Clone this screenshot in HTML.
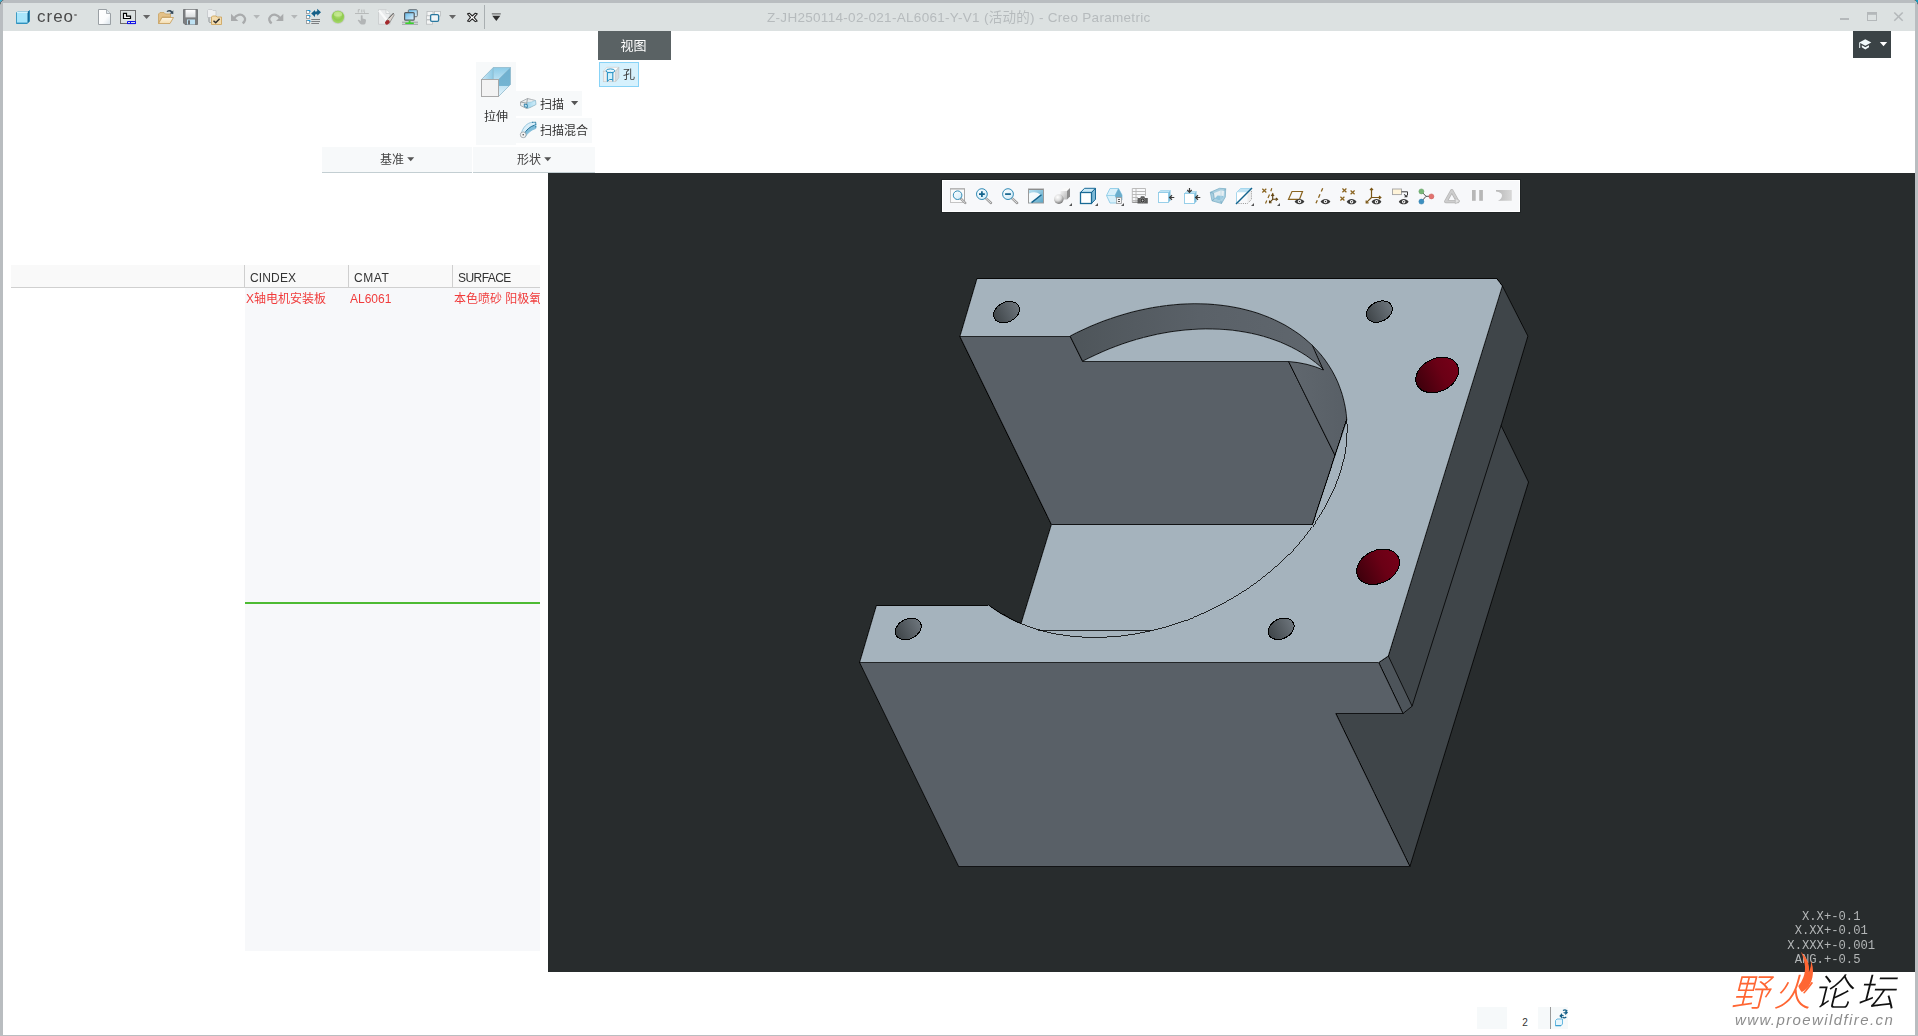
<!DOCTYPE html>
<html lang="zh-CN">
<head>
<meta charset="utf-8">
<title>Z-JH250114-02-021-AL6061-Y-V1 - Creo Parametric</title>
<style>
html,body{margin:0;padding:0;}
body{width:1918px;height:1036px;position:relative;overflow:hidden;background:#ffffff;
 font-family:"Liberation Sans","Noto Sans CJK SC",sans-serif;color:#333;}
.abs{position:absolute;}
#creo,#title,#viewtab,#holebtn span,#extrude span,#sweep span,#blend span,.grp span,.th,.td,#tol,.wmc,#wm2,.g{will-change:transform;}
#frame-top{left:0;top:0;width:1918px;height:3px;background:#b9bdc0;}
#frame-left{left:0;top:0;width:3px;height:1036px;background:#b9bdc0;}
#frame-right{left:1915px;top:0;width:3px;height:1036px;background:#b9bdc0;}
#frame-bottom{left:0;top:1035px;width:1918px;height:1px;background:#b9bdc0;}
#titlebar{left:3px;top:3px;width:1912px;height:28px;background:#dce1e1;}
#title{left:767px;top:8.5px;font-size:13.5px;line-height:17px;color:#b6bbbd;white-space:nowrap;letter-spacing:0.3px;}
#creo{left:36.8px;top:6.2px;font-size:17px;line-height:22px;color:#4a4a4a;letter-spacing:1px;}
#viewtab{left:598px;top:31px;width:73px;height:29px;background:#5a6264;color:#fff;font-size:13px;line-height:30px;text-align:center;text-indent:-2px;}
#holebtn{left:599px;top:62px;width:38px;height:23px;background:#d6f1fd;border:1px solid #88d3f7;}
#holebtn span{position:absolute;left:23px;top:4px;font-size:12px;line-height:16px;color:#3d3d3d;}
#extrude{left:476px;top:62px;width:40px;height:83px;background:#f7f9fa;}
#extrude span{position:absolute;left:-0.5px;width:40px;top:47px;text-align:center;font-size:12px;line-height:16px;color:#333;}
#sweep{left:516px;top:91px;width:66px;height:25px;background:#f7f9fa;}
#sweep span{position:absolute;left:23.5px;top:5.5px;font-size:12px;line-height:16px;color:#333;}
#blend{left:516px;top:118px;width:76px;height:25px;background:#f7f9fa;}
#blend span{position:absolute;left:23.5px;top:5.3px;font-size:12px;line-height:16px;color:#333;}
.grp{top:147px;height:25px;background:#f7f9fa;border-bottom:1px solid #c3ced2;font-size:12px;line-height:25px;color:#444;text-align:center;}
#grp1{left:322px;width:150px;}
#grp2{left:473px;width:122px;}
.tri{display:inline-block;width:0;height:0;border-left:3.8px solid transparent;border-right:3.8px solid transparent;border-top:4.4px solid #555;vertical-align:middle;margin-left:2px;margin-top:-1px;}
#help{left:1853px;top:31px;width:38px;height:27px;background:#3b4346;}
#thead{left:11px;top:265px;width:529px;height:22px;background:#f9f9f9;border-bottom:1px solid #d0d0d0;}
.th{top:265px;height:22px;border-left:1px solid #cfcfcf;font-size:12px;line-height:26px;color:#333;padding-left:5px;}
#tbody{left:245px;top:288px;width:295px;height:663px;background:#f7f8fa;}
.td{top:292px;font-size:12px;line-height:15px;color:#f03c3c;white-space:nowrap;overflow:hidden;}
#green{left:245px;top:602px;width:295px;height:2px;background:#4dbb33;}
#viewport{left:548px;top:173px;width:1367px;height:799px;background:#282c2d;overflow:hidden;}
#vtb{left:942px;top:180px;width:576px;height:30px;background:#f7f8fa;border:1px solid #ffffff;box-shadow:0 0 0 1px #1f2324;}
#tol{left:1780px;top:910px;width:200px;font-family:"Liberation Mono",monospace;font-size:12.2px;line-height:14.3px;color:#b3b6b7;white-space:pre;text-align:left;}
.sb{top:1007px;height:22px;background:#f6f9fa;}
.wmc{top:966px;font-family:"Noto Sans CJK SC","Liberation Sans",sans-serif;font-weight:300;font-size:38px;line-height:48px;font-style:italic;white-space:nowrap;color:#ff6633;}
#wm2{left:1734.5px;top:1010.7px;font-size:15px;line-height:18px;font-style:italic;color:#8c8c8c;white-space:nowrap;letter-spacing:1.4px;}
</style>
</head>
<body>
<div id="root" style="position:absolute;left:0;top:0;width:1918px;height:1036px;">
<!-- window frame -->
<div class="abs" id="frame-top"></div>
<div class="abs" id="titlebar"></div>
<div class="abs" id="frame-left"></div>
<div class="abs" id="frame-right"></div>
<div class="abs" id="frame-bottom"></div>
<div class="abs" id="creo">creo</div>
<div class="abs" style="left:74.300px;top:13.800px;width:2.400px;height:2.400px;border-radius:50%;background:#858585;"></div>
<div class="abs" id="title">Z-JH250114-02-021-AL6061-Y-V1 (活动的) - Creo Parametric</div>
<svg class="abs" style="left:0;top:0;z-index:6" width="1918" height="5" viewBox="0 0 1918 5" shape-rendering="crispEdges">
<rect x="0" y="0" width="2" height="1" fill="#3fb2d2"/><rect x="0" y="1" width="1" height="1" fill="#45aecf"/><rect x="2" y="0" width="1" height="1" fill="#5f7579"/><rect x="1" y="1" width="1" height="1" fill="#5f7579"/><rect x="0" y="2" width="1" height="2" fill="#5f7579"/><rect x="3" y="0" width="1" height="1" fill="#a9abad"/><rect x="0" y="4" width="1" height="1" fill="#a9abad"/>
<rect x="1916" y="0" width="2" height="2" fill="#08a2ca"/><rect x="1917" y="2" width="1" height="1" fill="#2c8aa5"/><rect x="1915" y="0" width="1" height="1" fill="#5f7579"/><rect x="1916" y="1" width="1" height="1" fill="#3f8aa0"/><rect x="1917" y="3" width="1" height="1" fill="#5f7579"/><rect x="1914" y="0" width="1" height="1" fill="#a9abad"/><rect x="1917" y="4" width="1" height="1" fill="#a9abad"/>
</svg>
<!--QAT_START-->
<svg class="abs" style="left:0;top:0" width="520" height="32" viewBox="0 0 520 32">
<defs>
<linearGradient id="qpage" x1="0" y1="0" x2="1" y2="1"><stop offset="0" stop-color="#ffffff"/><stop offset="0.6" stop-color="#fbfcfd"/><stop offset="1" stop-color="#d5e0e8"/></linearGradient>
<linearGradient id="qfold" x1="0" y1="0" x2="0" y2="1"><stop offset="0" stop-color="#fdf6e6"/><stop offset="1" stop-color="#f3dcae"/></linearGradient>
<linearGradient id="qmon" x1="0" y1="0" x2="1" y2="1"><stop offset="0" stop-color="#5fb7ea"/><stop offset="1" stop-color="#e2f2fb"/></linearGradient>
<radialGradient id="qball" cx="0.5" cy="0.35" r="0.65"><stop offset="0" stop-color="#b9e27a"/><stop offset="0.6" stop-color="#8fcb4f"/><stop offset="1" stop-color="#a8d86e"/></radialGradient>
<linearGradient id="qsave" x1="0" y1="0" x2="0" y2="1"><stop offset="0" stop-color="#ffffff"/><stop offset="1" stop-color="#d9dcde"/></linearGradient>
</defs>
<!-- creo cube -->
<path d="M17.5 11.5 L28.5 11.5 L29.5 10.5 L29.5 21.5 L27 23.5 L16.5 23.5 L16.5 12.5 Z" fill="#a9e6fb" stroke="#3f9cc4" stroke-width="1"/>
<path d="M27.5 12 L29.3 10.6 L29.3 21.4 L27.5 23 Z" fill="#146a97"/>
<path d="M17 12 L28 12" stroke="#ffffff" stroke-width="1"/>
<path d="M16.5 23.2 L27.2 23.2" stroke="#2b8fbd" stroke-width="1.2"/>
<!-- new file -->
<path d="M98.5 9.5 L106.5 9.5 L110.5 13.5 L110.5 24.5 L98.5 24.5 Z" fill="url(#qpage)" stroke="#9aa0a4" stroke-width="1"/>
<path d="M106.5 9.5 L106.5 13.5 L110.5 13.5" fill="#dfe8ee" stroke="#9aa0a4" stroke-width="0.8"/>
<!-- drawing icon -->
<rect x="120.5" y="10.5" width="15" height="13" fill="#dde2e2" stroke="#6d6d6d" stroke-width="1"/>
<path d="M123.5 13.3 L126.5 13.3 L126.5 16.2 L130.5 16.2 L130.5 18.5 L123.5 18.5 Z" fill="#ffffff" stroke="#000" stroke-width="1.2"/>
<path d="M127.5 24 L127.5 21.5 L135.5 21.5 L135.5 24 M130.5 21.5 L130.5 24 M127.5 23.6 L135.5 23.6" fill="none" stroke="#1111ee" stroke-width="1"/>
<path d="M143 15 L150.2 15 L146.6 19 Z" fill="#666"/>
<!-- open folder -->
<path d="M158.5 23.5 L158.5 14 L160 12.5 L164 12.5 L165.5 14 L170.5 14 L170.5 17 L162 17 Z" fill="#e3c189" stroke="#c9a363" stroke-width="0.8"/>
<path d="M158.5 23.5 L162 17.5 L173.5 17.5 L170 23.5 Z" fill="url(#qfold)" stroke="#c9a363" stroke-width="0.9"/>
<path d="M166.5 11.2 C168.5 9.6 171 9.8 172.2 11.6 L173.3 10.2 L173.3 14 L169.6 13.6 L171 12.5 C170.2 11.2 168.4 11.2 167.3 12 Z" fill="#34495a"/>
<!-- save -->
<path d="M183.5 9.5 L197.5 9.5 L197.5 24.5 L185 24.5 L183.5 23 Z" fill="#7d7f81" stroke="#6a6c6e" stroke-width="0.8"/>
<rect x="185.5" y="9.8" width="10" height="7.6" fill="url(#qsave)"/>
<rect x="187" y="19.5" width="8" height="5" fill="#bfe2f3"/>
<rect x="188" y="20.3" width="2" height="4.2" fill="#6b6d6f"/>
<!-- folder check -->
<path d="M207.5 10.5 L208.5 9.5 L212 9.5 L213 10.5 L216 10.5 L216 17.5 L207.5 17.5 Z" fill="#eef0f1" stroke="#c3c7c9" stroke-width="0.8"/>
<path d="M209 17.5 L209 21.5 Q209 22.5 210.5 22.5 L212 22.5" fill="none" stroke="#8d9193" stroke-width="1"/>
<path d="M211.5 24.5 L211.5 17 L212.5 16 L216 16 L217 17 L221.5 17 L221.5 24.5 Z" fill="#f3dcae" stroke="#cfa761" stroke-width="0.9"/>
<path d="M213.5 20.8 L215.7 22.8 L219.6 18.8" fill="none" stroke="#2e2e2e" stroke-width="1.5"/>
<!-- undo -->
<path d="M231 13.700 L231 21 L238.300 21 Z" fill="#a9abac"/>
<path d="M234.300 18.300 C236 14.600 241 13.400 243.700 16.200 C246 18.600 245.300 21.600 242.600 23.300" fill="none" stroke="#a9abac" stroke-width="2.300"/>
<path d="M253.300 15 L260 15 L256.600 18.800 Z" fill="#b4b7b8"/>
<!-- redo -->
<path d="M283.300 13.700 L283.300 21 L276 21 Z" fill="#a9abac"/>
<path d="M280 18.300 C278.300 14.600 273.300 13.400 270.600 16.200 C268.300 18.600 269 21.600 271.700 23.300" fill="none" stroke="#a9abac" stroke-width="2.300"/>
<path d="M291 15 L297.700 15 L294.300 18.800 Z" fill="#b4b7b8"/>
<!-- regenerate -->
<g fill="#ffffff" stroke="#8a8f92" stroke-width="0.8"><rect x="306.5" y="10.5" width="3" height="3"/><rect x="306.5" y="15.5" width="3" height="3"/><rect x="306.5" y="20.5" width="3" height="3"/></g>
<g fill="none" stroke="#1e9fe0" stroke-width="1"><path d="M307.5 10.5 L310 10.5 L310 12"/><path d="M307.500 15.5 L310 15.5 L310 17"/><path d="M307.500 20.5 L310 20.5 L310 22"/></g>
<g stroke="#707476" stroke-width="0.9"><path d="M311.300 19.500 L320 19.500 M311.300 21.500 L320 21.500 M311.300 23.500 L319 23.500"/></g>
<path d="M311.200 13.500 L315 10 L315 12.300 Q317.200 12.300 318.200 14 Q316.600 14.200 315 14.500 L315 17 Z" fill="#145f87"/>
<path d="M321 12.300 L317.200 15.800 L317.200 13.500 Q315 13.500 314 11.800 Q315.600 11.600 317.200 11.300 L317.200 8.800 Z" fill="#145f87"/>
<!-- green ball -->
<circle cx="338" cy="17" r="7" fill="#c8cccd" /><circle cx="338" cy="17" r="6.200" fill="url(#qball)"/>
<ellipse cx="338" cy="14" rx="4.200" ry="2.600" fill="#d6f0a8" opacity="0.550"/>
<!-- grey hand -->
<g fill="none" stroke="#b2b5b6" stroke-width="0.9"><path d="M355 13.500 L368.800 13.500"/><path d="M358.300 12.500 L358.300 9.700 L360 9.700 M361.800 9.500 L361.800 12.500 M364 9.500 L364 12 L365 12.500"/></g>
<path d="M360.800 15.500 Q361.800 14.800 362.600 15.600 L362.600 18.500 L365.300 19.200 Q366.200 19.600 366 20.800 L365.400 23.500 Q365 24.500 363.800 24.500 L361.800 24.500 Q360.800 24.400 360 23.400 L357.800 20.600 Q357.600 19.600 358.800 19.800 L360.800 21 Z" fill="#b2b5b6"/>
<!-- page + eraser -->
<path d="M378.500 9.700 L386 9.700 L390 13.500 L390 24.300 L378.500 24.300 Z" fill="#e9ebec" stroke="#c6cacc" stroke-width="0.8"/>
<path d="M386 9.700 L386 13.500 L390 13.500" fill="#f6f7f7" stroke="#c6cacc" stroke-width="0.700"/>
<path d="M379 10.500 L389 23" stroke="#f9fafa" stroke-width="2.200"/>
<path d="M386.200 20.800 L393.300 13.400 L394.200 15 L389.200 23.400 Z" fill="#d9d2cc" stroke="#6e6e6e" stroke-width="0.600"/>
<path d="M393.600 13 L388.800 18" stroke="#4c4c4c" stroke-width="0.800"/>
<ellipse cx="387.400" cy="22.300" rx="2.600" ry="1.900" transform="rotate(-40 387.400 22.300)" fill="#a3282c"/>
<!-- monitors -->
<rect x="408.300" y="9.700" width="9" height="7" rx="1" fill="url(#qmon)" stroke="#6a7176" stroke-width="1"/>
<rect x="404.600" y="12.600" width="9.600" height="7.600" rx="1" fill="url(#qmon)" stroke="#555b60" stroke-width="1.200"/>
<path d="M409.400 20.500 L409.400 23.500 M402 22.200 L418 22.200 M402 24.300 L418 24.300" stroke="#8c9194" stroke-width="0.800" fill="none"/>
<path d="M408.700 20.600 L410.500 20.600 L410.500 22.600 L413.800 22.600 L413.800 24 L405.300 24 L405.300 22.600 L408.700 22.600 Z" fill="#39d42c"/>
<!-- windows -->
<g fill="#f4f5f5" stroke="#b9bdbf" stroke-width="0.800"><rect x="427" y="11.500" width="6" height="4.500"/><rect x="434.500" y="11.500" width="6" height="4.500"/><rect x="426.500" y="15.800" width="6" height="3.700"/><rect x="426.500" y="20" width="6" height="4.200"/></g>
<rect x="430.600" y="14.700" width="8" height="6.600" rx="1.200" fill="#f2f6f8" stroke="#2a789f" stroke-width="1.300"/>
<path d="M449 15 L456 15 L452.500 19 Z" fill="#666"/>
<!-- X close -->
<path d="M467.500 13.800 L469.300 13.200 L472.300 16 L475.300 13.200 L477.200 13.800 L474.100 17.400 L477.200 21 L475.300 21.600 L472.300 18.800 L469.300 21.600 L467.500 21 L470.500 17.400 Z" fill="#ffffff" stroke="#222" stroke-width="1.100" stroke-linejoin="round"/>
<rect x="484" y="5" width="1" height="24" fill="#a9afb1"/>
<path d="M491.800 13.900 L500.800 13.900" stroke="#444" stroke-width="0.900"/>
<path d="M492.300 15.800 L500.300 15.800 L496.300 21 Z" fill="#2e2e2e"/>
</svg>
<!--QAT_END-->
<!--WINCTL_START-->
<svg class="abs" style="left:1830px;top:0;z-index:5" width="88" height="62" viewBox="1830 0 88 62">
<rect x="1840" y="18" width="9" height="2" fill="#b4b8ba"/>
<rect x="1867.500" y="12.500" width="9" height="8" fill="none" stroke="#b4b8ba" stroke-width="1"/>
<rect x="1867" y="12" width="10" height="2.800" fill="#b4b8ba"/>
<path d="M1894.300 12.500 L1902.700 20.700 M1902.700 12.500 L1894.300 20.700" stroke="#b4b8ba" stroke-width="1.600" fill="none"/>
<path d="M1865.300 39.200 L1871.300 42.400 L1865.300 45.800 L1860.200 43 L1860.200 48 L1859.200 48 L1859.200 42.400 Z" fill="#f2fbfc"/>
<path d="M1861.800 45.200 L1865.300 47.200 L1869 45.200 L1869 47.300 L1865.300 49.500 L1861.800 47.300 Z" fill="#f2fbfc"/>
<path d="M1879.800 42 L1887.200 42 L1883.500 46.200 Z" fill="#ffffff"/>
</svg>
<!--WINCTL_END-->

<!-- ribbon -->
<div class="abs" id="viewtab">视图</div>
<div class="abs" id="holebtn"><span>孔</span></div>
<div class="abs" id="extrude"><span>拉伸</span></div>
<div class="abs" id="sweep"><span>扫描</span></div>
<div class="abs" id="blend"><span>扫描混合</span></div>
<div class="abs grp" id="grp1"><span style="position:absolute;left:58.2px;top:1px;">基准</span><svg style="position:absolute;left:85px;top:10px;" width="8" height="5" viewBox="0 0 8 5"><path d="M0.200 0.200 L7.200 0.200 L3.700 4.200 Z" fill="#555"/></svg></div>
<div class="abs grp" id="grp2"><span style="position:absolute;left:44px;top:1px;">形状</span><svg style="position:absolute;left:70.600px;top:10px;" width="8" height="5" viewBox="0 0 8 5"><path d="M0.200 0.200 L7.200 0.200 L3.700 4.200 Z" fill="#555"/></svg></div>
<div class="abs" id="help"></div>
<!--RIBBONICONS_START-->
<svg class="abs" style="left:470px;top:60px" width="180" height="90" viewBox="470 60 180 90">
<defs>
<linearGradient id="rtop" x1="0" y1="0" x2="1" y2="0"><stop offset="0" stop-color="#cfeaf8"/><stop offset="1" stop-color="#8cc9e4"/></linearGradient>
<linearGradient id="rback" x1="0" y1="0" x2="0" y2="1"><stop offset="0" stop-color="#8ccbe7"/><stop offset="1" stop-color="#b9e0f2"/></linearGradient>
<linearGradient id="rside" x1="0" y1="0" x2="0" y2="1"><stop offset="0" stop-color="#6fb0cf"/><stop offset="0.62" stop-color="#74b4d2"/><stop offset="0.64" stop-color="#c2e4f4"/><stop offset="1" stop-color="#e3f3fb"/></linearGradient>
<linearGradient id="rsw" x1="0" y1="0" x2="1" y2="0"><stop offset="0" stop-color="#9ed6ee"/><stop offset="1" stop-color="#d2ecf8"/></linearGradient>
</defs>
<!-- extrude -->
<path d="M481.500 79.500 L493.300 67.500 L493.300 79.500 Z" fill="url(#rtop)"/>
<path d="M493.300 67.500 L510.500 67.500 L498.500 79.500 L493.300 79.500 Z" fill="url(#rback)"/>
<path d="M498.500 79.500 L510.500 67.500 L510.500 84.500 L498.500 96.500 Z" fill="url(#rside)"/>
<path d="M481.500 79.500 L493.300 67.500 L510.500 67.500 L510.500 84.500 L498.500 96.500" fill="none" stroke="#8fb9cc" stroke-width="0.800"/>
<path d="M493.300 67.500 L493.300 79.500 M498.500 79.500 L510.500 67.500" fill="none" stroke="#7fb3cb" stroke-width="0.700"/>
<rect x="481.500" y="79.500" width="17" height="17" fill="#f3f3f3" stroke="#a9a9a9" stroke-width="1"/>
<!-- sweep -->
<path d="M520.500 102 L527.500 98.500 L531.500 99.500 L535.500 100.500 L535.800 104.500 L530 107.500 L526.500 108.500 L520.500 105.500 Z" fill="#e9ecee" stroke="#9aa0a3" stroke-width="0.800"/>
<path d="M527 102.500 Q531 102.800 535.500 100.500 L535.800 104.500 Q531 107 527.500 108.300 Z" fill="url(#rsw)" stroke="#8fc6de" stroke-width="0.600"/>
<path d="M520.500 102 L526.700 103.200 L527.500 98.500 M526.700 103.200 L526.700 108.300" fill="none" stroke="#8c9295" stroke-width="0.800"/>
<path d="M524.300 104 L527.300 104.700 L527.300 107.600 L524.300 106.600 Z" fill="#bfe4f5" stroke="#2b7ea6" stroke-width="0.900"/>
<path d="M571 101 L578.200 101 L574.600 105.200 Z" fill="#555"/>
<!-- swept blend -->
<path d="M521 134 C523 127 527 123 532 122.300 L535.800 122.300 L535.800 128.500 C531 130 527.500 133 525 137.400 Z" fill="#d9eef9" stroke="#86bdd6" stroke-width="0.800"/>
<path d="M523.500 136 C526 130 530 126.500 534 125.400 L535.800 122.300 L535.800 128.500 C531 130 527.500 133 525 137.400 Z" fill="#7fbcd9"/>
<path d="M532 122.300 L535.800 122.300 L535.800 128.500" fill="none" stroke="#1f6f96" stroke-width="0.900" stroke-dasharray="1.500 1"/>
<path d="M523.500 135 C526 130 530 126.500 534.500 125.200" fill="none" stroke="#1f6f96" stroke-width="1"/>
<circle cx="523.200" cy="134.800" r="2.900" fill="#f1f3f4" stroke="#9aa0a3" stroke-width="0.800"/>
<circle cx="523.200" cy="134.800" r="0.700" fill="#333"/>
<!-- hole -->
<path d="M603.300 71.300 L606.800 67.300 L618.800 67.300 L615.600 71.300 Z" fill="#fdfdfd" stroke="#c9c9c9" stroke-width="0.600"/>
<path d="M615.600 71.300 L618.800 67.300 L618.800 77.800 L615.600 81.700 Z" fill="#d7dee2" stroke="#b9bcbe" stroke-width="0.600"/>
<rect x="603.300" y="71.300" width="12.300" height="10.400" fill="#efefef" stroke="#cbcbcb" stroke-width="0.700"/>
<path d="M607.400 72.600 L607.400 81.800 L609 80 Q610.200 79 612.700 79.600 L612.700 72.600 Z" fill="#d2f2fd"/>
<ellipse cx="610.400" cy="70.800" rx="4.400" ry="1.900" fill="#e9f8fe" stroke="#2a93c6" stroke-width="1"/>
<path d="M607.400 72.300 L607.400 81.800 M612.800 72.300 L612.800 81.500" fill="none" stroke="#2a93c6" stroke-width="1.100"/>
<path d="M607.600 72.900 Q610.200 71.600 612.700 72.900" fill="none" stroke="#2a93c6" stroke-width="0.900"/>
<path d="M607.600 81 Q609 78.800 612.700 79.500" fill="none" stroke="#2a93c6" stroke-width="1"/>
</svg>
<!--RIBBONICONS_END-->

<!-- table -->
<div class="abs" id="thead"></div>
<div class="abs th" style="left:244px;width:98px;letter-spacing:0.15px;">CINDEX</div>
<div class="abs th" style="left:348px;width:98px;letter-spacing:0.6px;">CMAT</div>
<div class="abs th" style="left:452px;width:82px;letter-spacing:-0.55px;">SURFACE</div>
<div class="abs" id="tbody"></div>
<div class="abs td" style="left:246px;width:100px;">X轴电机安装板</div>
<div class="abs td" style="left:350px;width:100px;">AL6061</div>
<div class="abs td" style="left:454px;width:86px;">本色喷砂 阳极氧化</div>
<div class="abs" id="green"></div>

<!-- viewport -->
<div class="abs" id="viewport">
<!--MODEL_START-->
<svg class="abs" style="left:0;top:0" width="1367" height="799" viewBox="548 173 1367 799">
<defs><linearGradient id="gband" x1="1070" y1="0" x2="1330" y2="0" gradientUnits="userSpaceOnUse"><stop offset="0" stop-color="#4e555a"/><stop offset="0.5" stop-color="#5a6168"/><stop offset="1" stop-color="#60676e"/></linearGradient><linearGradient id="gwall" x1="1290" y1="0" x2="1346" y2="0" gradientUnits="userSpaceOnUse"><stop offset="0" stop-color="#60676e"/><stop offset="1" stop-color="#585f66"/></linearGradient><linearGradient id="ghole" x1="0" y1="0" x2="1" y2="0"><stop offset="0" stop-color="#3f4549"/><stop offset="1" stop-color="#6d757c"/></linearGradient><linearGradient id="gred" x1="0" y1="0" x2="1" y2="0"><stop offset="0" stop-color="#3e000c"/><stop offset="0.6" stop-color="#6a0015"/><stop offset="1" stop-color="#760018"/></linearGradient></defs>
<g stroke="#000" stroke-width="0.8" stroke-linejoin="round" shape-rendering="crispEdges">
<path fill="#3f4549" d="M1496.7 278.5 L1502.4 286 L1527.9 336.1 L1501.1 425.5 L1528.5 482.1 L1409.9 866.5 L1335.8 713.5 L1403 713.5 L1378.7 662.5 L1388.3 656 Z"/>
<path fill="#4d545a" d="M1378.7 662.5 L1388.3 656 L1412.1 706.2 L1403 713.5 Z"/>
<path fill="none" d="M1501.1 425.5 L1412.1 706.2"/>
<path fill="#596067" d="M859.6 662.5 L1378.7 662.5 L1403 713.5 L1335.8 713.5 L1409.9 866.5 L958.7 866.5 Z"/>
<path fill="#a5b3bd" d="M977 278.5 L1496.7 278.5 L1502.4 286 L1388.3 656 L1378.7 662.5 L859.6 662.5 L876.4 605.5 L988 605.5 L988.6 605.0 L992.8 608.1 L997.1 611.0 L1001.6 613.9 L1006.3 616.5 L1011.1 619.0 L1016.0 621.4 L1021.0 623.6 L1051.4 524.5 L959.9 336.5 Z"/>
<path fill="#596067" d="M959.9 336.5 L1070.3 336.5 L1082.7 361.5 L1288.6 361.5 L1335 455.3 L1312.4 524.5 L1051.4 524.5 Z"/>
<path fill="url(#gwall)" d="M1288.6 361.5 Q1308 363 1323.2 369.9 L1311.9 345.6 L1312.3 345.3 L1316.8 350.0 L1321.1 354.9 L1325.1 360.0 L1328.7 365.3 L1332.1 370.8 L1335.1 376.4 L1337.8 382.2 L1340.1 388.2 L1342.2 394.3 L1343.8 400.5 L1345.2 406.8 L1346.2 413.3 L1346.8 419.9 L1335 455.3 Z"/>
<path fill="url(#gband)" d="M1070.3 336.5 L1070.1 336.1 L1076.6 332.7 L1083.3 329.6 L1090.0 326.5 L1096.8 323.7 L1103.6 321.0 L1110.5 318.6 L1117.4 316.3 L1124.4 314.2 L1131.4 312.2 L1138.4 310.5 L1145.4 309.0 L1152.5 307.6 L1159.5 306.5 L1166.5 305.5 L1173.4 304.8 L1180.4 304.2 L1187.2 303.9 L1194.1 303.7 L1200.9 303.8 L1207.6 304.0 L1214.2 304.5 L1220.8 305.2 L1227.2 306.0 L1233.6 307.1 L1239.8 308.3 L1246.0 309.8 L1252.0 311.4 L1257.9 313.2 L1263.6 315.3 L1269.3 317.5 L1274.7 319.9 L1280.0 322.5 L1285.2 325.2 L1290.1 328.2 L1294.9 331.3 L1299.6 334.5 L1304.0 338.0 L1308.2 341.6 L1312.3 345.3 L1323.2 369.9 L1323.7 369.6 L1319.6 365.9 L1315.3 362.3 L1310.9 359.0 L1306.3 355.7 L1301.5 352.7 L1296.5 349.8 L1291.3 347.1 L1286.0 344.6 L1280.6 342.2 L1275.0 340.1 L1269.2 338.1 L1263.4 336.3 L1257.4 334.7 L1251.3 333.3 L1245.0 332.1 L1238.7 331.1 L1232.3 330.2 L1225.7 329.6 L1219.1 329.2 L1212.5 329.0 L1205.7 328.9 L1198.9 329.1 L1192.1 329.5 L1185.2 330.0 L1178.3 330.8 L1171.3 331.7 L1164.4 332.9 L1157.4 334.2 L1150.4 335.8 L1143.5 337.5 L1136.5 339.4 L1129.6 341.5 L1122.7 343.8 L1115.9 346.3 L1109.1 348.9 L1102.3 351.8 L1095.7 354.8 L1089.1 357.9 L1082.6 361.2 Z"/>
</g>
<g fill="none" stroke="#000" stroke-width="0.8" shape-rendering="crispEdges">
<path d="M1346.3 420.0 L1346.8 419.9 L1347.1 425.7 L1347.1 431.6 L1346.8 437.5 L1346.3 443.5 L1345.5 449.5 L1344.5 455.5 L1343.1 461.6 L1341.6 467.7 L1339.7 473.7 L1337.6 479.8 L1335.3 485.9 L1332.6 491.9 L1329.8 497.9 L1326.7 503.9 L1323.3 509.8 L1319.7 515.7 L1315.9 521.5 L1311.9 527.3 L1307.6 533.0 L1303.2 538.6 L1298.5 544.1 L1293.6 549.5 L1288.5 554.8 L1283.2 560.0 L1277.7 565.0 L1272.1 570.0 L1266.3 574.8 L1260.3 579.5 L1254.2 584.0 L1248.0 588.4 L1241.6 592.6 L1235.0 596.7 L1228.4 600.5 L1221.6 604.3 L1214.8 607.8 L1207.8 611.2 L1200.8 614.3 L1193.7 617.3 L1186.5 620.1 L1179.3 622.7 L1172.0 625.1 L1164.7 627.3 L1157.4 629.3 L1150.0 631.0 L1142.6 632.6 L1135.3 633.9 L1128.0 635.0 L1120.6 636.0 L1113.3 636.6 L1106.1 637.1 L1098.9 637.3 L1091.8 637.4 L1084.7 637.2 L1077.7 636.7 L1070.9 636.1 L1064.1 635.2 L1057.4 634.2 L1050.8 632.9 L1044.4 631.3 L1038.1 629.6 L1031.9 627.7 L1025.9 625.5 L1020.0 623.2 L1014.3 620.6 L1008.8 617.9 L1003.5 614.9 L998.3 611.8 L993.4 608.5 L988.6 605.0"/>
<path d="M1346.3 420 L1335 455.3 L1312.4 524.5"/>
<path d="M1037.6 630.5 L1150.6 630.5"/>
</g>
<ellipse cx="1006.5" cy="312.1" rx="13.6" ry="9.9" transform="rotate(-26.2 1006.5 312.1)" fill="url(#ghole)" stroke="#000" stroke-width="1" shape-rendering="crispEdges"/>
<ellipse cx="1379.4" cy="311.6" rx="13.6" ry="9.9" transform="rotate(-26.2 1379.4 311.6)" fill="url(#ghole)" stroke="#000" stroke-width="1" shape-rendering="crispEdges"/>
<ellipse cx="908.3" cy="629.0" rx="13.6" ry="9.9" transform="rotate(-26.2 908.3 629.0)" fill="url(#ghole)" stroke="#000" stroke-width="1" shape-rendering="crispEdges"/>
<ellipse cx="1281.1" cy="628.8" rx="13.6" ry="9.9" transform="rotate(-26.2 1281.1 628.8)" fill="url(#ghole)" stroke="#000" stroke-width="1" shape-rendering="crispEdges"/>
<ellipse cx="1437.2" cy="375.0" rx="22.5" ry="16.4" transform="rotate(-26.2 1437.2 375.0)" fill="url(#gred)" stroke="#000" stroke-width="1" shape-rendering="crispEdges"/>
<ellipse cx="1378.0" cy="566.8" rx="22.5" ry="16.4" transform="rotate(-26.2 1378.0 566.8)" fill="url(#gred)" stroke="#000" stroke-width="1" shape-rendering="crispEdges"/>
</svg>
<!--MODEL_END-->
</div>
<div class="abs" id="vtb"></div>
<!--VTBICONS_START-->
<svg class="abs" style="left:942px;top:180px" width="578" height="32" viewBox="942 180 578 32">
<defs>
<linearGradient id="vlens" x1="0" y1="0" x2="1" y2="1"><stop offset="0" stop-color="#ffffff"/><stop offset="1" stop-color="#cfeaf7"/></linearGradient>
<linearGradient id="vrep" x1="0" y1="0" x2="1" y2="1"><stop offset="0" stop-color="#bfe4f4"/><stop offset="1" stop-color="#58a5c6"/></linearGradient>
<radialGradient id="vsph" cx="0.38" cy="0.3" r="0.75"><stop offset="0" stop-color="#ffffff"/><stop offset="0.5" stop-color="#dadada"/><stop offset="1" stop-color="#6c6c6c"/></radialGradient>
<linearGradient id="vcube" x1="0" y1="0" x2="1" y2="1"><stop offset="0" stop-color="#f2f2f2"/><stop offset="1" stop-color="#b5b5b5"/></linearGradient>
<linearGradient id="vgrey" x1="0" y1="0" x2="1" y2="0"><stop offset="0" stop-color="#b8b8b8"/><stop offset="1" stop-color="#d8d8d8"/></linearGradient>
<g id="eye"><path d="M-4.900 0 C-2.600 -3.500 2.600 -3.500 4.900 0 C2.600 3.500 -2.600 3.500 -4.900 0 Z" fill="#3a3a3a"/><circle cx="0" cy="0" r="1.700" fill="#ffffff"/><circle cx="0" cy="0" r="0.750" fill="#3a3a3a"/></g>
<path id="tri" d="M0 3 L3 0 L3 3 Z" fill="#555"/>
</defs>
<!-- 1 refit -->
<rect x="950.500" y="188.500" width="14" height="14" fill="#fbfbfb" stroke="#c4c4c4" stroke-width="1"/><path d="M950 189 L965 189" stroke="#a8a8a8" stroke-width="1"/><path d="M964.500 189 L964.500 203" stroke="#a8a8a8" stroke-width="1"/>
<path d="M960.800 198.600 L965.300 203" stroke="#9a9a9a" stroke-width="2.400" stroke-linecap="round"/>
<path d="M961 198.800 L965 202.700" stroke="#e6e6e6" stroke-width="0.900" stroke-linecap="round"/>
<circle cx="957.600" cy="195.200" r="4.300" fill="url(#vlens)" stroke="#2f8ab5" stroke-width="1"/>
<!-- 2 zoom in -->
<path d="M986 198.400 L991 203" stroke="#9a9a9a" stroke-width="2.400" stroke-linecap="round"/>
<path d="M986.200 198.600 L990.700 202.700" stroke="#e6e6e6" stroke-width="0.900" stroke-linecap="round"/>
<circle cx="981.900" cy="194.100" r="5.400" fill="url(#vlens)" stroke="#2f8ab5" stroke-width="1"/>
<path d="M979 194.100 L984.800 194.100 M981.900 191.200 L981.900 197" stroke="#12628c" stroke-width="1.700"/>
<!-- 3 zoom out -->
<path d="M1012.100 198.400 L1017.100 203" stroke="#9a9a9a" stroke-width="2.400" stroke-linecap="round"/>
<path d="M1012.300 198.600 L1016.800 202.700" stroke="#e6e6e6" stroke-width="0.900" stroke-linecap="round"/>
<circle cx="1008" cy="194.100" r="5.400" fill="url(#vlens)" stroke="#2f8ab5" stroke-width="1"/>
<path d="M1005.100 194.100 L1010.900 194.100" stroke="#12628c" stroke-width="1.700"/>
<!-- 4 repaint -->
<rect x="1028.500" y="189" width="15" height="14" fill="url(#vrep)" stroke="#9b9b9b" stroke-width="1"/>
<path d="M1029 189.500 L1043 189.500" stroke="#8d8d8d" stroke-width="1"/>
<path d="M1029 202.500 L1029 193.500 Q1035 190.500 1040.500 194.500 L1032 202.500 Z" fill="#ffffff" opacity="0.900"/>
<path d="M1031.500 202.600 L1041.500 194.800" stroke="#12628c" stroke-width="1.400"/>
<!-- 5 shading -->
<path d="M1060.500 191 L1063.500 188 L1070 188 L1067 191 Z" fill="#fafafa"/>
<path d="M1060.500 191 L1067 191 L1067 199.500 L1060.500 199.500 Z" fill="url(#vcube)"/>
<path d="M1067 191 L1070 188 L1070 196.500 L1067 199.500 Z" fill="#8d8d8d"/>
<circle cx="1058.800" cy="199.100" r="4.800" fill="url(#vsph)"/>
<use href="#tri" x="1069" y="203"/>
<!-- 6 saved orientations -->
<path d="M1080.500 192.500 L1084.500 188.300 L1095.500 188.300 L1091.500 192.500 Z" fill="#c8e8f6" stroke="#1a6a96" stroke-width="1"/>
<path d="M1091.500 192.500 L1095.500 188.300 L1095.500 199.300 L1091.500 203.500 Z" fill="#7db9d6" stroke="#1a6a96" stroke-width="1"/>
<rect x="1080.500" y="192.500" width="11" height="11" fill="#ffffff" stroke="#1a6a96" stroke-width="1.300"/>
<use href="#tri" x="1095" y="203"/>
<!-- 7 view manager -->
<path d="M1106.500 195.500 L1110 188.500 L1118.500 188.500 L1122 195 L1122 200 L1118.500 203 L1110 203 Z" fill="#d9f0fa" stroke="#8ccbe6" stroke-width="0.900"/>
<path d="M1106.500 195.500 L1115 195.500 L1118.500 188.500 M1115 195.500 L1118.500 203" fill="none" stroke="#8ccbe6" stroke-width="0.800"/>
<path d="M1115 195.500 L1118.500 188.500 L1122 195 L1122 200 L1118.500 203 Z" fill="#6aadcc"/>
<rect x="1116.500" y="197.500" width="5" height="6" fill="#f2f2f2" stroke="#9a9a9a" stroke-width="0.800"/>
<path d="M1118 199.500 L1120 199.500 M1118 201.500 L1120 201.500" stroke="#444" stroke-width="0.900"/>
<use href="#tri" x="1121" y="203"/>
<!-- 8 table + camera -->
<g fill="none" stroke="#b4b4b4" stroke-width="0.900"><path d="M1132.300 188.500 L1145.500 188.500 M1132.300 191.500 L1145.500 191.500 M1132.300 194.500 L1145.500 194.500 M1132.300 197.500 L1138 197.500 M1132.300 200.500 L1138 200.500 M1132.300 188.500 L1132.300 202.500 M1136 188.500 L1136 202.500 M1145.500 188.500 L1145.500 196"/></g>
<path d="M1132.300 202.300 L1138 202.300" stroke="#8c8c8c" stroke-width="1.200"/>
<path d="M1137.500 198 L1140.300 198 L1141 196.300 L1144.300 196.300 L1145 198 L1147.800 198 L1147.800 203.500 L1137.500 203.500 Z" fill="#5a5a5a"/>
<circle cx="1142.600" cy="200.500" r="2.300" fill="#2d2d2d" stroke="#8c8c8c" stroke-width="0.700"/>
<circle cx="1142.600" cy="200.500" r="0.900" fill="#bdbdbd"/>
<!-- 9 cube arrow -->
<path d="M1158.500 192.500 L1160.500 190.500 L1170.500 190.500 L1168.500 192.500 Z" fill="#bfe3f4" stroke="#9ed3eb" stroke-width="0.700"/>
<path d="M1168.500 192.500 L1170.500 190.500 L1170.500 200.500 L1168.500 202.500 Z" fill="#7fbddb"/>
<rect x="1158.500" y="192.500" width="10" height="10" fill="#ffffff" stroke="#8ecbe7" stroke-width="0.900"/>
<path d="M1169.500 197.500 L1174.300 197.500 M1172 195.300 L1169.600 197.500 L1172 199.700" fill="none" stroke="#3a3a3a" stroke-width="1.200"/>
<!-- 10 cube two arrows -->
<path d="M1184.500 193.500 L1186.500 191.500 L1196.500 191.500 L1194.500 193.500 Z" fill="#bfe3f4" stroke="#9ed3eb" stroke-width="0.700"/>
<path d="M1194.500 193.500 L1196.500 191.500 L1196.500 201.500 L1194.500 203.500 Z" fill="#7fbddb"/>
<rect x="1184.500" y="193.500" width="10" height="10" fill="#ffffff" stroke="#8ecbe7" stroke-width="0.900"/>
<path d="M1195.500 197.500 L1200.300 197.500 M1198 195.300 L1195.600 197.500 L1198 199.700" fill="none" stroke="#3a3a3a" stroke-width="1.200"/>
<path d="M1189.500 188 L1189.500 192.300 M1187.300 190 L1189.500 192.400 L1191.700 190" fill="none" stroke="#3a3a3a" stroke-width="1.200"/>
<!-- 11 perspective -->
<path d="M1210.300 192.300 L1219.500 188.300 L1225.700 188.700 L1225.300 197 L1221.500 203.500 L1212 200.800 Z" fill="#a9cfe0" stroke="#7fb1c8" stroke-width="0.800"/>
<path d="M1213.500 193.300 L1220.500 190.500 L1224 190.700 L1223.700 196 L1220.800 200.800 L1214.300 199 Z" fill="#e6eef2"/>
<path d="M1214.300 199 L1220.800 200.800 L1223.700 196 L1217.500 195.500 Z" fill="#8fc4dc"/>
<path d="M1210.300 192.300 L1213.500 193.300 L1214.300 199 L1212 200.800 M1221.500 203.500 L1220.800 200.800 M1225.700 188.700 L1224 190.700" fill="none" stroke="#6fa5bf" stroke-width="0.700"/>
<path d="M1221 191 L1221 200.500" stroke="#bcd9e6" stroke-width="0.800"/>
<!-- 12 section -->
<path d="M1236.500 192.500 L1240.500 188.500 L1251.500 188.500 L1247.500 192.500 Z" fill="#bfe3f4"/>
<path d="M1236.500 192.500 L1247.500 192.500 L1236.500 203.500 Z" fill="#ffffff"/>
<path d="M1236.500 203.500 L1236.500 192.500 L1240.500 188.500 L1251.500 188.500" fill="none" stroke="#9ed3eb" stroke-width="0.900"/>
<path d="M1247.500 192.500 L1251.500 188.500 L1251.500 199.500 L1247.500 203.500 Z" fill="#ececec"/>
<path d="M1238.500 203.500 L1247.500 203.500 L1251.500 199.500 L1251.500 191" fill="none" stroke="#8c8c8c" stroke-width="0.900" stroke-dasharray="1 1.200"/>
<path d="M1236 204 L1252 188" stroke="#12628c" stroke-width="1.400"/>
<use href="#tri" x="1251" y="203"/>
<!-- 13 datum display -->
<g fill="none" stroke="#8a6420" stroke-width="1.200"><path d="M1262.300 188.700 L1266.300 192.500 M1266.300 188.700 L1262.300 192.500"/><path d="M1271.800 188.300 L1270.800 191.300 M1269.500 194.500 L1268 198 M1266.800 200.500 L1265.500 203.500 M1273 193 L1272 195.500"/></g>
<g fill="none" stroke="#5c3f0c" stroke-width="1.100"><path d="M1272.700 194.500 L1272.700 199.300 L1277.300 199.300 M1272.700 199.300 L1269.700 202.500"/><path d="M1271.300 196 L1272.700 194.300 L1274.100 196 M1275.800 198 L1277.500 199.300 L1275.800 200.600 M1269.500 200.500 L1269.500 202.700 L1271.600 202.700"/></g>
<use href="#tri" x="1277" y="203"/>
<!-- 14 plane display -->
<path d="M1292 191.500 L1302.500 191.500 L1299.500 199.300 L1288.500 199.300 Z" fill="none" stroke="#8a6420" stroke-width="1.200"/>
<use href="#eye" x="1299.500" y="201.500"/>
<!-- 15 axis display -->
<path d="M1322.700 188.300 L1321.300 191.500 M1320 194.300 L1318.500 197.700 M1317.300 200.300 L1316 203.300" fill="none" stroke="#8a6420" stroke-width="1.300"/>
<use href="#eye" x="1325.500" y="201.500"/>
<!-- 16 point display -->
<g fill="none" stroke="#8a6420" stroke-width="1.200"><path d="M1342.400 188.500 L1346.400 192.300 M1346.400 188.500 L1342.400 192.300"/><path d="M1350.600 190.500 L1354.600 194.300 M1354.600 190.500 L1350.600 194.300"/><path d="M1340.400 196.700 L1344.400 200.500 M1344.400 196.700 L1340.400 200.500"/></g>
<use href="#eye" x="1351.600" y="201.700"/>
<!-- 17 csys display -->
<g fill="none" stroke="#7a5616" stroke-width="1.200"><path d="M1371.500 188.500 L1371.500 197.500 L1380.500 197.500 M1371.500 197.500 L1366.300 202.700"/><path d="M1370 190.200 L1371.500 188.400 L1373 190.200 M1379 196 L1380.800 197.500 L1379 199 M1366.200 200.400 L1366.200 202.800 L1368.600 202.800"/></g>
<use href="#eye" x="1376.500" y="201.700"/>
<!-- 18 annotation display -->
<rect x="1392.500" y="189" width="9" height="5.600" fill="#fff4d9" stroke="#a3a3a3" stroke-width="0.900"/>
<path d="M1401.500 191.800 L1407.500 191.800 L1407.500 195" fill="none" stroke="#3a3a3a" stroke-width="1"/>
<path d="M1407.700 194.200 L1407.300 197.300 L1404 197.300 L1405.300 196 L1403.700 194.700 L1404.500 194 L1406.200 195.400 Z" fill="#3a3a3a"/>
<use href="#eye" x="1403.700" y="201.700"/>
<!-- 19 spin center -->
<path d="M1421.400 191.400 L1426 196.300 L1431.400 196.300 M1426 196.300 L1421.400 201.600" fill="none" stroke="#3d3d3d" stroke-width="0.900"/>
<circle cx="1421.400" cy="191.400" r="2.500" fill="#77b577" stroke="#5f9f5f" stroke-width="0.500"/>
<circle cx="1431.400" cy="196.400" r="2.500" fill="#e2726f" stroke="#c95c59" stroke-width="0.500"/>
<circle cx="1421.400" cy="201.600" r="2.500" fill="#3d8fc0" stroke="#2f7cab" stroke-width="0.500"/>
<!-- 20 grey triangle -->
<path d="M1451.800 190.800 L1457.800 201.600 L1445.800 201.600 Z" fill="none" stroke="#b4b4b4" stroke-width="3.400" stroke-linejoin="round"/>
<path d="M1451.800 190.800 L1457.800 201.600 L1445.800 201.600 Z" fill="none" stroke="#cdcdcd" stroke-width="2" stroke-linejoin="round"/>
<path d="M1455.300 198.300 L1460 201 L1455.300 203.700 Z" fill="#e3e3e3" stroke="#bcbcbc" stroke-width="0.700" stroke-linejoin="round"/>
<!-- 21 pause -->
<rect x="1472" y="190" width="3.700" height="10.800" fill="#b7b7b7"/>
<rect x="1479.200" y="190" width="3.700" height="10.800" fill="#b7b7b7"/>
<!-- 22 grey shape -->
<path d="M1496 190 L1511.800 190 L1511.800 200.800 L1498 200.800 Q1502 198.500 1502 195.400 Q1502 192.400 1496 191.500 Z" fill="url(#vgrey)"/>
</svg>
<!--VTBICONS_END-->
<div class="abs" id="tol">   X.X+-0.1
  X.XX+-0.01
 X.XXX+-0.001
  ANG.+-0.5</div>

<!-- status bar -->
<div class="abs sb" style="left:1477px;width:30px;"></div>
<div class="abs" style="left:1522.300px;top:1017px;font-size:10px;line-height:12px;color:#333;">2</div>
<div class="abs sb" style="left:1538px;width:30px;"></div>
<div class="abs" style="left:1550px;top:1007px;width:1px;height:22px;background:#9a9a9a;"></div>
<!--SBICON_START-->
<svg class="abs" style="left:1552px;top:1007px" width="18" height="22" viewBox="1552 1007 18 22">
<path d="M1555.500 1020.500 L1557 1019 L1562.500 1019 L1562.500 1024 L1561 1025.700 L1555.500 1025.700 Z" fill="#e6f5fc" stroke="#58b1dc" stroke-width="0.900"/>
<path d="M1555.500 1025.600 L1561.200 1025.600" stroke="#3b9fd0" stroke-width="1.100"/>
<path d="M1559.300 1016 L1562 1013 L1562 1014.800 C1563.200 1014.800 1563.800 1015.400 1564.100 1016.400 C1563.300 1016 1562.700 1016 1562 1016.200 L1562 1018.400 Z" fill="#145f87"/>
<path d="M1568 1012.500 L1565.300 1015.300 L1565.300 1013.600 C1564.200 1013.600 1563.600 1013 1563.300 1012 C1564 1012.400 1564.600 1012.400 1565.300 1012.200 L1565.300 1010 Z" fill="#145f87"/>
<path d="M1563 1010.600 C1564.500 1009.600 1566.200 1009.800 1567.300 1011.200" fill="none" stroke="#145f87" stroke-width="1.200"/>
<path d="M1566.300 1017 C1565 1018 1563.500 1018 1562.500 1017" fill="none" stroke="#145f87" stroke-width="1.200"/>
</svg>
<!--SBICON_END-->

<!-- watermark -->
<div class="abs wmc" style="left:1731.3px;">野</div>
<div class="abs wmc" style="left:1772.6px;">火</div>
<div class="abs wmc" style="left:1813.4px;color:#111;">论</div>
<div class="abs wmc" style="left:1856.7px;color:#111;">坛</div>
<div class="abs" id="wm2">www.proewildfire.cn</div>
<!--FLAME_START-->
<svg class="abs" style="left:1790px;top:945px" width="40" height="60" viewBox="1790 945 40 60">
<path d="M1800.800 951.800 C1806.500 957.500 1810.200 964 1808.800 972.500 C1810.500 968.500 1811.500 964.500 1810.800 960.500 C1814.500 968.500 1813.500 980 1808.500 986.500 C1806.500 989.300 1803.500 991.500 1801.800 992 C1800.300 990.500 1799 988.300 1798.300 986 C1802.500 981 1805.500 974 1805 966.500 C1804.500 961 1803 956 1800.800 951.800 Z" fill="#ff6633"/>
</svg>
<!--FLAME_END-->
</div>
</body>
</html>
